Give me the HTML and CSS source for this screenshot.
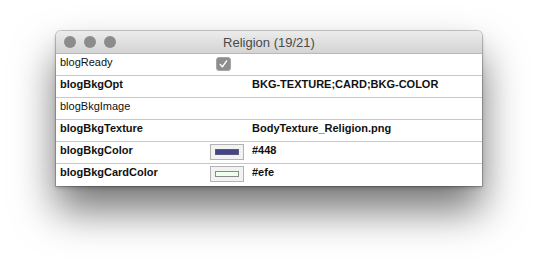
FILE: index.html
```html
<!DOCTYPE html>
<html lang="en">
<head>
  <meta charset="UTF-8">
  <title>Religion (19/21)</title>
  <link rel="stylesheet" href="styles.css">
</head>
<body>
  <div class="window">
    <div class="titlebar">
      <div class="lights">
        <span class="light"></span>
        <span class="light"></span>
        <span class="light"></span>
      </div>
      <div class="title">Religion (19/21)</div>
    </div>

    <div class="row">
      <div class="key">blogReady</div>
      <div class="widget">
        <span class="checkbox">
          <svg width="13" height="12" viewBox="0 0 13 12"><path d="M3.2 6.4 L5.4 8.8 L9.6 2.8" fill="none" stroke="#fff" stroke-width="1.4" stroke-linecap="round" stroke-linejoin="round"/></svg>
        </span>
      </div>
      <div class="val"></div>
    </div>
    <div class="row">
      <div class="key bold">blogBkgOpt</div>
      <div class="widget"></div>
      <div class="val">BKG-TEXTURE;CARD;BKG-COLOR</div>
    </div>
    <div class="row">
      <div class="key">blogBkgImage</div>
      <div class="widget"></div>
      <div class="val"></div>
    </div>
    <div class="row">
      <div class="key bold">blogBkgTexture</div>
      <div class="widget"></div>
      <div class="val">BodyTexture_Religion.png</div>
    </div>
    <div class="row">
      <div class="key bold">blogBkgColor</div>
      <div class="widget"><span class="swatch"><span class="chip" style="background: #448;"></span></span></div>
      <div class="val">#448</div>
    </div>
    <div class="row">
      <div class="key bold">blogBkgCardColor</div>
      <div class="widget"><span class="swatch"><span class="chip chip-light" style="background: #efe;"></span></span></div>
      <div class="val">#efe</div>
    </div>
  </div>
</body>
</html>
```

FILE: styles.css
```css
html {
  background: #fff;
}
body {
  margin: 0;
  padding: 31px 0 0 56px;
  min-height: 268px;
  box-sizing: border-box;
  font-family: 'Liberation Sans', Arial, sans-serif;
  font-size: 11px;
  color: #111;
}
.window {
  width: 426px;
  box-sizing: border-box;
  background: #fff;
  border-radius: 5px 5px 0 0;
  box-shadow: 0 0 0 1px rgba(0, 0, 0, 0.2), 0 2px 4px rgba(0, 0, 0, 0.2), 0 24px 42px rgba(0, 0, 0, 0.55);
  overflow: hidden;
}
.titlebar {
  height: 22px;
  border-bottom: 1px solid #b8b8b8;
  background: linear-gradient(#ececec, #d4d4d4);
  display: flex;
  align-items: center;
  position: relative;
}
.lights {
  display: flex;
  gap: 8px;
  padding-left: 8px;
}
.light {
  width: 12px;
  height: 12px;
  border-radius: 50%;
  background: #8c8c8e;
}
.title {
  position: absolute;
  left: 0;
  right: 0;
  top: 4px;
  text-align: center;
  font-size: 13px;
  color: #4a4a4a;
}
.row {
  display: flex;
  height: 21px;
  border-bottom: 1px solid #c9c9c9;
  line-height: 13px;
}
.row:last-child {
  border-bottom: none;
  height: 22px;
}
.key {
  width: 150px;
  padding: 2px 0 0 4px;
}
.bold,
.val {
  font-weight: bold;
}
.widget {
  width: 42px;
  padding-top: 2px;
}
.val {
  padding-top: 2px;
}
.checkbox {
  display: block;
  margin: 1px 0 0 6px;
  width: 13px;
  height: 12px;
  border: 1px solid #a5a5a5;
  border-radius: 3px;
  background: #8e8e8e;
}
.checkbox svg {
  display: block;
}
.swatch {
  display: flex;
  align-items: center;
  justify-content: center;
  width: 32px;
  height: 14px;
  border: 1px solid #b3b3b3;
  background: #f2f2f2;
}
.chip {
  display: block;
  width: 22px;
  height: 4px;
  border: 1px solid #5a5a7a;
}
.chip-light {
  border-color: #8a8a8a;
}
```
